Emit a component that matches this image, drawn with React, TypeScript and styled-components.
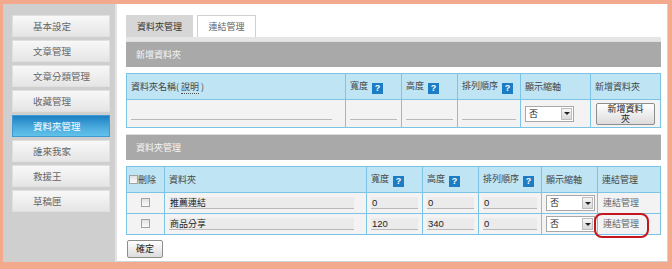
import React from 'react';
import styled, {createGlobalStyle} from 'styled-components';

const SALMON = '#f2a98c';
const CELL_BORDER = '#7cc3e6';
const HEAD_BG = '#bfe4f4';
const ROW_BG = '#f3f3f3';

const GlobalStyle = createGlobalStyle`
  html, body {
    margin: 0;
    padding: 0;
    background: ${SALMON};
  }
  body {
    font-family: "Noto Sans CJK TC", "Liberation Sans", sans-serif;
    font-size: 9px;
    color: #444;
  }
`;

const Frame = styled.div`
  width: 672px;
  height: 269px;
  box-sizing: border-box;
  padding: 4px 5px 7px 3px;
  display: flex;
  background: ${SALMON};
`;

const Sidebar = styled.nav`
  width: 114px;
  flex: none;
  box-sizing: border-box;
  background: #cfcfcf;
  border-right: 2px solid #e3e3e3;
  padding: 11px 0 0 9px;
  display: flex;
  flex-direction: column;
  gap: 3px;
`;

const NavItem = styled.div<{active?: boolean}>`
  width: 98px;
  height: 22px;
  box-sizing: border-box;
  padding-left: 20px;
  font-size: 9.5px;
  line-height: 20px;
  color: ${p => (p.active ? '#fff' : '#666')};
  background: ${p =>
    p.active
      ? 'linear-gradient(#1b7fc3, #4aa9dc 55%, #62c2ea)'
      : 'linear-gradient(#f8f8f8, #e5e5e5)'};
  border: 1px solid ${p => (p.active ? '#3d9bd3' : '#e0e0e0')};
`;

const Main = styled.main`
  flex: 1;
  background: #fff;
  border-right: 1px solid #cdd5db;
  border-bottom: 1px solid #cdd5db;
  padding: 11px 6px 0 9px;
`;

const TabBar = styled.div`
  display: flex;
  gap: 4px;
  border-bottom: 4px solid #e5e5e5;
`;

const Tab = styled.div<{active?: boolean; w: number}>`
  width: ${p => p.w}px;
  height: 22px;
  box-sizing: border-box;
  text-align: center;
  font-size: 9px;
  line-height: 21px;
  color: ${p => (p.active ? '#333' : '#666')};
  background: ${p => (p.active ? '#d6d6d6' : '#fff')};
  border: 1px solid ${p => (p.active ? '#d6d6d6' : '#d0d0d0')};
  border-bottom: none;
`;

const SectionBar = styled.div<{gap: number}>`
  margin-top: ${p => p.gap}px;
  height: 26px;
  box-sizing: border-box;
  background: #a9a9a9;
  border-top: 1px solid #dedede;
  padding-left: 10px;
  font-size: 9px;
  line-height: 25px;
  color: #f6f6f6;
`;

const Table = styled.table`
  margin-top: 6px;
  width: 534px;
  border-collapse: collapse;
  table-layout: fixed;
`;

const Th = styled.th`
  height: 25px;
  padding: 0 4px;
  background: ${HEAD_BG};
  border: 1px solid ${CELL_BORDER};
  text-align: left;
  font-weight: normal;
  font-size: 9px;
  line-height: 12px;
  color: #444;
  white-space: nowrap;
`;

const Td = styled.td<{h: number; center?: boolean}>`
  height: ${p => p.h}px;
  padding: 0 4px;
  background: ${ROW_BG};
  border: 1px solid ${CELL_BORDER};
  text-align: ${p => (p.center ? 'center' : 'left')};
  vertical-align: middle;
  font-size: 9px;
  line-height: 12px;
`;

const Hint = styled.span`
  border-bottom: 1px dotted #555;
`;

const Help = styled.span`
  display: inline-block;
  width: 11px;
  height: 11px;
  margin-left: 4px;
  vertical-align: -2px;
  background: #1c7cc4;
  color: #fff;
  font-family: "Liberation Sans", sans-serif;
  font-weight: bold;
  font-size: 9px;
  line-height: 11px;
  text-align: center;
`;

const LineInput = styled.input<{tint?: boolean; num?: boolean}>`
  display: block;
  width: 100%;
  height: 12px;
  box-sizing: border-box;
  margin: 0;
  padding: 0 1px;
  border: none;
  border-bottom: 1px solid #b9b9b9;
  background: ${p => (p.tint ? '#ebebeb' : 'transparent')};
  font-family: ${p =>
    p.num ? '"Liberation Sans", sans-serif' : '"Noto Sans CJK TC", sans-serif'};
  font-size: ${p => (p.num ? 9.5 : 9)}px;
  line-height: 11px;
  color: #222;
  outline: none;
`;

const Select = styled.div`
  display: flex;
  align-items: center;
  width: 49px;
  height: 16px;
  box-sizing: border-box;
  border: 1px solid #a8a8a8;
  background: #fff;
  font-size: 9px;
  color: #222;
`;

const SelectText = styled.span`
  flex: 1;
  padding-left: 3px;
`;

const SelectArrow = styled.span`
  width: 11px;
  height: 12px;
  margin-right: 1px;
  box-sizing: border-box;
  border: 1px solid #bdbdbd;
  background: linear-gradient(#f6f6f6, #d9d9d9);
  display: flex;
  align-items: center;
  justify-content: center;
  &::after {
    content: '';
    border-left: 3px solid transparent;
    border-right: 3px solid transparent;
    border-top: 3px solid #222;
  }
`;

const Button = styled.button<{w: number; h: number}>`
  width: ${p => p.w}px;
  height: ${p => p.h}px;
  margin: 0;
  padding: 0 8px;
  box-sizing: border-box;
  border: 1px solid #8d8d8d;
  border-radius: 2px;
  background: linear-gradient(#ffffff, #dcdcdc);
  font-family: "Noto Sans CJK TC", sans-serif;
  font-size: 9px;
  line-height: 10px;
  color: #222;
  vertical-align: middle;
`;

const Check = styled.span`
  display: inline-block;
  width: 9px;
  height: 9px;
  box-sizing: border-box;
  border: 1px solid #a2a2a2;
  background: linear-gradient(#e2e2e2, #fafafa);
  vertical-align: -1px;
`;

const HeadCheck = styled(Check)`
  margin-left: -2px;
`;

const LinkCell = styled.div`
  position: relative;
  padding-left: 1px;
  color: #666;
  font-size: 9px;
`;

const Circle = styled.span`
  position: absolute;
  left: -8px;
  top: -5px;
  width: 55px;
  height: 25px;
  box-sizing: border-box;
  border: 2px solid #c4161c;
  border-radius: 8px;
`;

const Footer = styled.div`
  display: flex;
  margin-top: 5px;
  padding-left: 1px;
`;

const NAV = ['基本設定', '文章管理', '文章分類管理', '收藏管理', '資料夾管理', '誰來我家', '救援王', '草稿匣'];

const FOLDERS = [
  {name: '推薦連結', w: '0', h: '0', order: '0', mark: false},
  {name: '商品分享', w: '120', h: '340', order: '0', mark: true},
];

export default function App() {
  return (
    <>
      <GlobalStyle />
      <Frame>
        <Sidebar>
          {NAV.map(n => (
            <NavItem key={n} active={n === '資料夾管理'}>
              {n}
            </NavItem>
          ))}
        </Sidebar>
        <Main>
          <TabBar>
            <Tab active w={67}>資料夾管理</Tab>
            <Tab w={59}>連結管理</Tab>
          </TabBar>

          <SectionBar gap={0}>新增資料夾</SectionBar>
          <Table>
            <colgroup>
              <col style={{width: 219}} />
              <col style={{width: 56}} />
              <col style={{width: 56}} />
              <col style={{width: 63}} />
              <col style={{width: 70}} />
              <col style={{width: 70}} />
            </colgroup>
            <thead>
              <tr>
                <Th>
                  資料夾名稱( <Hint>說明</Hint> )
                </Th>
                <Th>
                  寬度<Help>?</Help>
                </Th>
                <Th>
                  高度<Help>?</Help>
                </Th>
                <Th>
                  排列順序<Help>?</Help>
                </Th>
                <Th>顯示縮軸</Th>
                <Th>新增資料夾</Th>
              </tr>
            </thead>
            <tbody>
              <tr>
                <Td h={27}>
                  <LineInput style={{width: 201}} />
                </Td>
                <Td h={27}>
                  <LineInput />
                </Td>
                <Td h={27}>
                  <LineInput />
                </Td>
                <Td h={27}>
                  <LineInput />
                </Td>
                <Td h={27}>
                  <Select>
                    <SelectText>否</SelectText>
                    <SelectArrow />
                  </Select>
                </Td>
                <Td h={27} center>
                  <Button w={59} h={22}>新增資料夾</Button>
                </Td>
              </tr>
            </tbody>
          </Table>

          <SectionBar gap={6}>資料夾管理</SectionBar>
          <Table>
            <colgroup>
              <col style={{width: 38}} />
              <col style={{width: 202}} />
              <col style={{width: 56}} />
              <col style={{width: 56}} />
              <col style={{width: 63}} />
              <col style={{width: 56}} />
              <col style={{width: 63}} />
            </colgroup>
            <thead>
              <tr>
                <Th>
                  <HeadCheck />
                  刪除
                </Th>
                <Th>資料夾</Th>
                <Th>
                  寬度<Help>?</Help>
                </Th>
                <Th>
                  高度<Help>?</Help>
                </Th>
                <Th>
                  排列順序<Help>?</Help>
                </Th>
                <Th>顯示縮軸</Th>
                <Th>連結管理</Th>
              </tr>
            </thead>
            <tbody>
              {FOLDERS.map(f => (
                <tr key={f.name}>
                  <Td h={20} center>
                    <Check />
                  </Td>
                  <Td h={20}>
                    <LineInput tint defaultValue={f.name} style={{width: 185}} />
                  </Td>
                  <Td h={20}>
                    <LineInput tint num defaultValue={f.w} />
                  </Td>
                  <Td h={20}>
                    <LineInput tint num defaultValue={f.h} />
                  </Td>
                  <Td h={20}>
                    <LineInput tint num defaultValue={f.order} />
                  </Td>
                  <Td h={20}>
                    <Select>
                      <SelectText>否</SelectText>
                      <SelectArrow />
                    </Select>
                  </Td>
                  <Td h={20}>
                    <LinkCell>
                      連結管理
                      {f.mark && <Circle />}
                    </LinkCell>
                  </Td>
                </tr>
              ))}
            </tbody>
          </Table>

          <Footer>
            <Button w={36} h={18}>確定</Button>
          </Footer>
        </Main>
      </Frame>
    </>
  );
}
